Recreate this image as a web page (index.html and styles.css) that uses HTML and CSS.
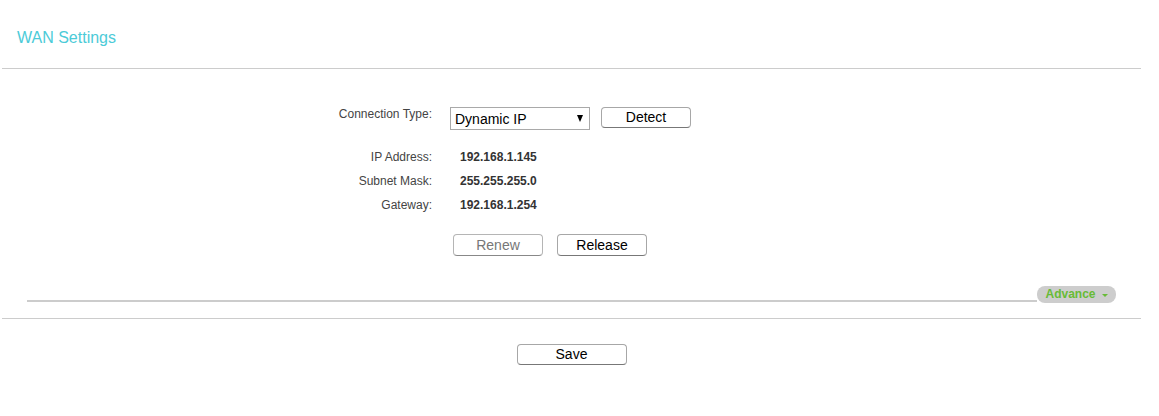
FILE: index.html
```html
<!DOCTYPE html>
<html>
<head>
<meta charset="utf-8">
<link rel="stylesheet" href="styles.css">
</head>
<body>
<div class="page">
  <div class="head"><h1 class="title">WAN Settings</h1></div>
  <div class="rule"></div>
  <div class="form">
    <div class="row row-conn">
      <div class="label">Connection Type:</div>
      <div class="select"><span>Dynamic IP</span><span class="arrow"></span></div>
      <button class="btn btn-detect">Detect</button>
    </div>
    <div class="info">
      <div class="row row-info"><div class="label">IP Address:</div><div class="value">192.168.1.145</div></div>
      <div class="row row-info"><div class="label">Subnet Mask:</div><div class="value">255.255.255.0</div></div>
      <div class="row row-info"><div class="label">Gateway:</div><div class="value">192.168.1.254</div></div>
    </div>
    <div class="row row-actions">
      <button class="btn btn-renew" disabled>Renew</button>
      <button class="btn btn-release">Release</button>
    </div>
  </div>
  <div class="advance-bar">
    <div class="advance-line"></div>
    <div class="advance-pill">Advance <span class="caret"></span></div>
  </div>
  <div class="rule rule-bottom"></div>
  <div class="footer"><button class="btn btn-save">Save</button></div>
</div>
</body>
</html>
```
FILE: styles.css
```css
html, body {
  margin: 0;
  padding: 0;
  background: #fff;
  font-family: "Liberation Sans", Arial, sans-serif;
  color: #333;
}
.page {
  width: 1143px;
}
.head {
  padding: 28px 0 0 17px;
  height: 68px;
  box-sizing: border-box;
}
.title {
  margin: 0;
  font-size: 16px;
  line-height: 20px;
  font-weight: normal;
  color: #4ccbd8;
}
.rule {
  margin: 0 2px;
  height: 1px;
  background: #cccccc;
}
.form {
  padding-top: 38px;
}
.row {
  display: flex;
  align-items: flex-start;
}
.label {
  width: 432px;
  text-align: right;
  font-size: 12px;
  color: #444;
  flex: none;
}
.row-conn .label {
  line-height: 15px;
  margin-top: 0;
}
.select {
  margin-left: 18px;
  width: 140px;
  height: 23px;
  box-sizing: border-box;
  border: 1px solid #a9a9a9;
  display: flex;
  align-items: center;
  justify-content: space-between;
  padding: 0 6px 0 4px;
  font-size: 14px;
  color: #000;
}
.arrow {
  width: 0;
  height: 0;
  border-left: 3.5px solid transparent;
  border-right: 3.5px solid transparent;
  border-top: 7px solid #000;
}
.btn {
  font-family: "Liberation Sans", Arial, sans-serif;
  font-size: 14px;
  color: #000;
  background: #fff;
  border: 1px solid #a7a7a7;
  border-bottom-color: #777;
  border-radius: 4px;
  padding: 0;
  box-sizing: border-box;
  height: 21px;
  width: 90px;
  line-height: 19px;
  cursor: pointer;
}
.btn-detect {
  margin-left: 11px;
}
.info {
  padding-top: 15px;
}
.row-info {
  line-height: 24px;
}
.row-info .label {
  line-height: 24px;
}
.value {
  margin-left: 28px;
  font-size: 12px;
  font-weight: bold;
  color: #333;
}
.row-actions {
  padding: 17px 0 0 453px;
  gap: 14px;
}
.btn-renew,
.btn-release {
  height: 22px;
}
.btn-renew {
  color: #777;
  border-color: #b5b5b5;
  border-bottom-color: #888;
}
.advance-bar {
  display: flex;
  align-items: flex-end;
  margin: 30px 0 0 27px;
  width: 1089px;
  height: 17px;
}
.advance-line {
  flex: 1;
  height: 2px;
  margin-bottom: 1px;
  background: #cccccc;
}
.advance-pill {
  width: 79px;
  height: 17px;
  border-radius: 8px;
  background: #cdcdcd;
  color: #67bb36;
  font-size: 12px;
  font-weight: bold;
  line-height: 17px;
  display: flex;
  align-items: center;
  justify-content: center;
  gap: 6px;
}
.caret {
  width: 0;
  height: 0;
  border-left: 3px solid transparent;
  border-right: 3px solid transparent;
  border-top: 3px solid #67bb36;
  margin-top: 1px;
}
.rule-bottom {
  margin-top: 15px;
}
.footer {
  display: flex;
  justify-content: center;
  padding-top: 25px;
}
.btn-save {
  width: 110px;
  height: 21px;
}
```
